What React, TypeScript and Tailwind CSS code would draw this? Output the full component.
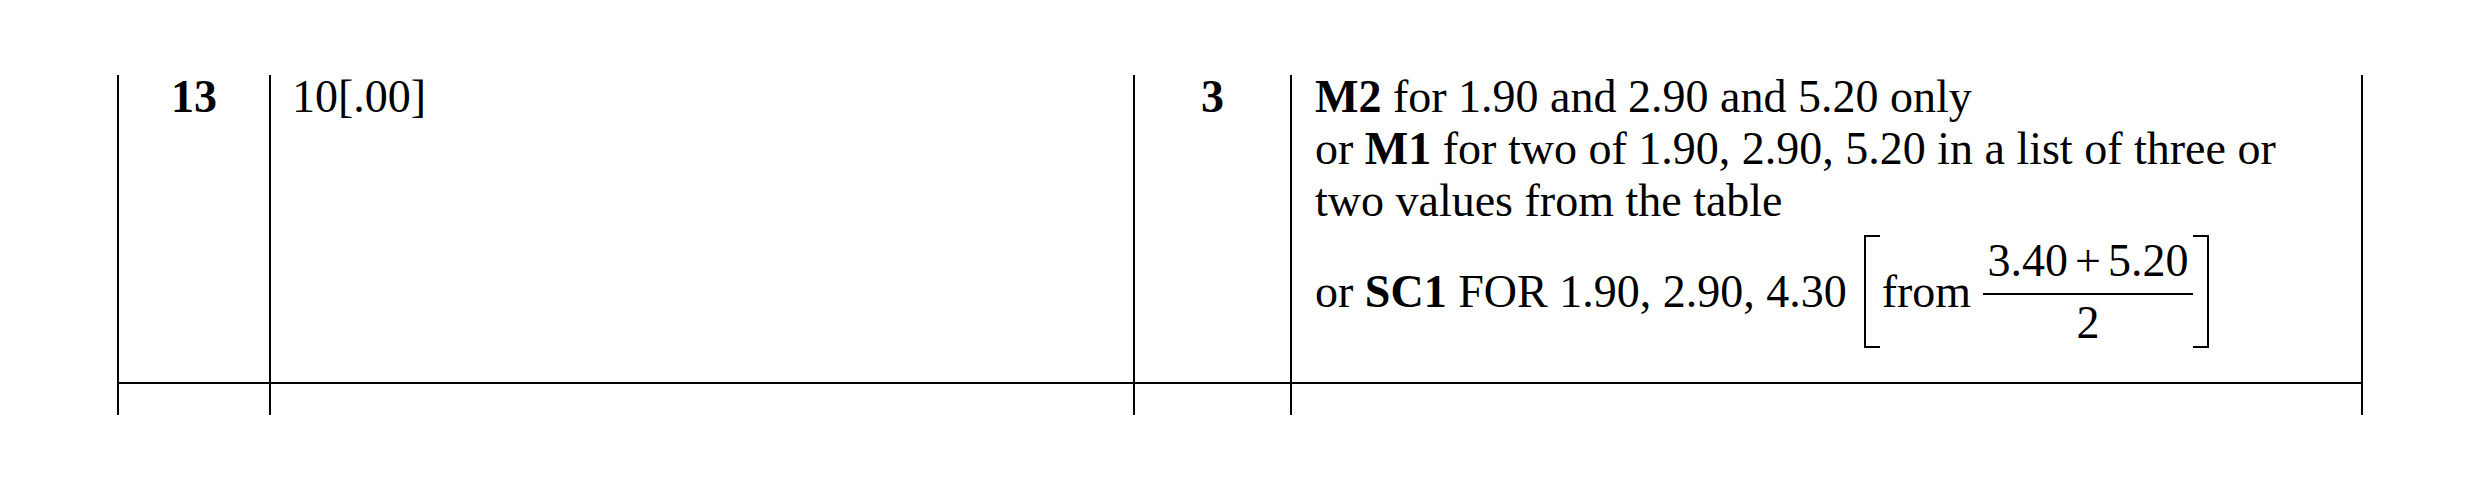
import React from "react";

const serif = { fontFamily: '"Liberation Serif", "Times New Roman", serif' };

function Fraction() {
  return (
    <div className="flex flex-col items-stretch w-[210px] ml-[12px]">
      <div className="h-[46px] leading-[46px] text-center whitespace-nowrap">
        3.40<span className="mx-[7px]">+</span>5.20
      </div>
      <div className="h-[2px] bg-black mt-[9px] mb-[5px]" />
      <div className="h-[46px] leading-[46px] text-center">2</div>
    </div>
  );
}

export default function App() {
  return (
    <div
      className="w-[2480px] h-[491px] bg-white text-black text-[46px] leading-[52px] pl-[117px] pt-[75px]"
      style={serif}
    >
      <div className="grid grid-cols-[152px_864px_157px_1073px]">
        {/* Row 1 */}
        <div className="h-[309px] border-l-2 border-b-2 border-black">
          <div className="-mt-[4px] text-center font-bold">13</div>
        </div>
        <div className="h-[309px] border-l-2 border-b-2 border-black pl-[21px]">
          <div className="-mt-[4px]">10[.00]</div>
        </div>
        <div className="h-[309px] border-l-2 border-b-2 border-black">
          <div className="-mt-[4px] text-center font-bold">3</div>
        </div>
        <div className="h-[309px] border-l-2 border-r-2 border-b-2 border-black pl-[23px]">
          <div className="-mt-[4px] whitespace-nowrap">
            <div>
              <b>M2</b> for 1.90 and 2.90 and 5.20 only
            </div>
            <div>
              or <b>M1</b> for two of 1.90, 2.90, 5.20 in a list of three or
            </div>
            <div>two values from the table</div>
            <div className="flex items-center mt-[8px]">
              <span>
                or <b>SC1</b> FOR 1.90, 2.90, 4.30
              </span>
              <div className="ml-[17px] w-[16px] h-[113px] border-l-2 border-t-2 border-b-2 border-black" />
              <span className="ml-[2px]">from</span>
              <Fraction />
              <div className="w-[16px] h-[113px] border-r-2 border-t-2 border-b-2 border-black" />
            </div>
          </div>
        </div>
        {/* Row 2 */}
        <div className="h-[31px] border-l-2 border-black" />
        <div className="h-[31px] border-l-2 border-black" />
        <div className="h-[31px] border-l-2 border-black" />
        <div className="h-[31px] border-l-2 border-r-2 border-black" />
      </div>
    </div>
  );
}
